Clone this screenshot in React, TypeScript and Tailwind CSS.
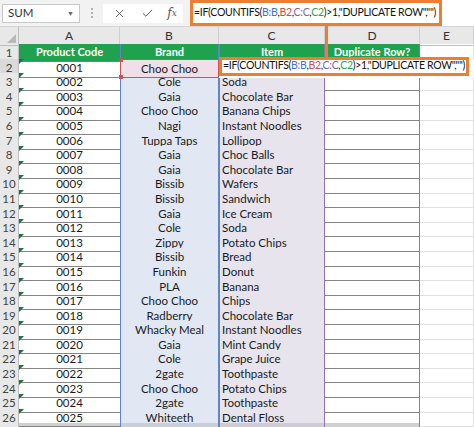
import React from "react";
import { X, Check } from "lucide-react";

const data: [string, string, string][] = [
  ["0001", "Choo Choo", ""],
  ["0002", "Cole", "Soda"],
  ["0003", "Gaia", "Chocolate Bar"],
  ["0004", "Choo Choo", "Banana Chips"],
  ["0005", "Nagi", "Instant Noodles"],
  ["0006", "Tuppa Taps", "Lollipop"],
  ["0007", "Gaia", "Choc Balls"],
  ["0008", "Gaia", "Chocolate Bar"],
  ["0009", "Bissib", "Wafers"],
  ["0010", "Bissib", "Sandwich"],
  ["0011", "Gaia", "Ice Cream"],
  ["0012", "Cole", "Soda"],
  ["0013", "Zippy", "Potato Chips"],
  ["0014", "Bissib", "Bread"],
  ["0015", "Funkin", "Donut"],
  ["0016", "PLA", "Banana"],
  ["0017", "Choo Choo", "Chips"],
  ["0018", "Radberry", "Chocolate Bar"],
  ["0019", "Whacky Meal", "Instant Noodles"],
  ["0020", "Gaia", "Mint Candy"],
  ["0021", "Cole", "Grape Juice"],
  ["0022", "2gate", "Toothpaste"],
  ["0023", "Choo Choo", "Potato Chips"],
  ["0024", "2gate", "Toothpaste"],
  ["0025", "Whiteeth", "Dental Floss"],
];

const grid = "grid grid-cols-[19px_101px_99px_106px_95px_54px]";

function Formula() {
  return (
    <span className="whitespace-nowrap text-[10.5px] tracking-[-0.3px] text-[#111]">
      =IF(COUNTIFS(<span className="text-[#4472c4]">B:B</span>,
      <span className="text-[#c0504d]">B2</span>,
      <span className="text-[#8064a2]">C:C</span>,
      <span className="text-[#3f9a4a]">C2</span>)&gt;1,"DUPLICATE ROW","")
    </span>
  );
}

function RowHead({ n, active }: { n?: number; active?: boolean }) {
  return (
    <div
      className={`flex items-center justify-center border-r border-b border-r-[#bdbdbd] border-b-[#d2d2d2] text-[11.5px] ${
        active ? "bg-[#dadada] text-[#3a3a3a]" : "bg-[#e8e8e8] text-[#444]"
      }`}
    >
      {n}
    </div>
  );
}

export default function App() {
  return (
    <div className="w-[474px] h-[427px] overflow-hidden bg-white relative font-['Lato','Open_Sans',sans-serif] text-[#1a1a1a]">
      {/* Formula bar */}
      <div className="h-[27px] flex items-center bg-[#f2f2f2] border-b border-[#d6d6d6]">
        <div className="ml-[2px] w-[78px] h-[19px] bg-white border border-[#c8c8c8] flex items-center justify-between pl-[5px] pr-[5px] text-[11.5px] text-[#333]">
          <span>SUM</span>
          <span className="text-[7px] text-[#666]">▼</span>
        </div>
        <div className="w-[23px] flex flex-col items-center gap-[2px]">
          <div className="w-[2px] h-[2px] bg-[#b0b0b0]" />
          <div className="w-[2px] h-[2px] bg-[#b0b0b0]" />
          <div className="w-[2px] h-[2px] bg-[#b0b0b0]" />
        </div>
        <div className="w-[80px] h-[19px] bg-white flex items-center text-[#555]">
          <div className="w-[28px] flex justify-center ml-[2px]">
            <X size={13} strokeWidth={1.6} />
          </div>
          <div className="w-[28px] flex justify-center">
            <Check size={13} strokeWidth={1.8} />
          </div>
          <div className="w-[22px] flex justify-center font-['DejaVu_Serif',serif] italic text-[12px] text-[#555]">
            f<span className="text-[9px] mt-[3px]">x</span>
          </div>
        </div>
        <div className="ml-[7px] flex-1 h-full bg-white flex items-center">
          <div className="w-[252px] h-[26px] border-[3px] border-[#ed7d31] flex items-center pl-[1px]">
            <Formula />
          </div>
        </div>
      </div>

      {/* Column headers */}
      <div className={`${grid} h-[17px] bg-[#e8e8e8] text-[12px] text-[#333]`}>
        <div className="relative border-r border-b border-[#bdbdbd]">
          <div className="absolute right-[2px] bottom-[2px] w-0 h-0 border-l-[9px] border-l-transparent border-b-[9px] border-b-[#b8b8b8]" />
        </div>
        {["A", "B", "C", "D", "E"].map((c) => (
          <div
            key={c}
            className="flex items-center justify-center border-r border-b border-r-[#cfcfcf] border-b-[#bdbdbd]"
          >
            {c}
          </div>
        ))}
      </div>

      {/* Row 1 */}
      <div className={`${grid} h-[14.6px] text-[11px]`}>
        <RowHead n={1} />
        <div className="bg-[#1ea24d] text-white font-bold flex items-center justify-center border-b border-[#7f7f7f]">
          Product Code
        </div>
        <div className="bg-[#1ea24d] text-white font-bold flex items-center justify-center border-b border-[#7f7f7f] shadow-[inset_1px_0_0_#5b86c9,inset_-1px_0_0_#5b86c9]">
          Brand
        </div>
        <div className="bg-[#1ea24d] text-white font-bold flex items-center justify-center border-b border-[#7f7f7f] shadow-[inset_1px_0_0_#8a75b0,inset_-1px_0_0_#8a75b0]">
          Item
        </div>
        <div className="bg-[#1ea24d] text-white font-bold flex items-center justify-center border-b border-r border-[#7f7f7f]">
          Duplicate Row?
        </div>
        <div className="border-r border-b border-[#e1e1e1]" />
      </div>

      {/* Data rows */}
      {data.map(([code, brand, item], i) => {
        const n = i + 2;
        const first = i === 0;
        return (
          <div key={n} className={`${grid} h-[14.6px] text-[11.5px]`}>
            <RowHead n={n} active={first} />
            <div className="relative flex items-center justify-center border-b border-[#858585]">
              <div className="absolute left-0 top-0 w-0 h-0 border-t-[5px] border-t-[#1e7145] border-r-[5px] border-r-transparent" />
              {code}
            </div>
            {first ? (
              <div className="relative flex items-center justify-center bg-[#efdfe6] border border-[#c9545a]">
                <div className="absolute left-[-2px] top-[-2px] w-[4px] h-[4px] bg-[#c9545a]" />
                <div className="absolute left-[-2px] bottom-[-2px] w-[4px] h-[4px] bg-[#c9545a]" />
                {brand}
              </div>
            ) : (
              <div className="flex items-center justify-center bg-[#e1e8f3] border-b border-[#a4a9b3] shadow-[inset_1px_0_0_#5b86c9,inset_-1px_0_0_#5b86c9]">
                {brand}
              </div>
            )}
            {first ? (
              <div className="col-span-3 relative bg-white">
                <div className="absolute left-0 top-[-2px] w-[250px] h-[19px] bg-white border-[3px] border-[#ed7d31] flex items-center pl-[1px] z-10">
                  <Formula />
                </div>
              </div>
            ) : (
              <>
                <div className="flex items-center pl-[3px] bg-[#e7e4ee] border-b border-[#a7a3ae] shadow-[inset_1px_0_0_#8a75b0,inset_-1px_0_0_#8a75b0] whitespace-nowrap overflow-hidden">
                  {item}
                </div>
                <div className="border-r border-b border-[#858585]" />
                <div className="border-r border-b border-[#e1e1e1]" />
              </>
            )}
          </div>
        );
      })}

      {/* Row 27 partial */}
      <div className={`${grid} h-[14.6px]`}>
        <RowHead />
        <div className="bg-[#d0d0d0]" />
        <div className="bg-[#c9cfd9] shadow-[inset_1px_0_0_#5b86c9,inset_-1px_0_0_#5b86c9]" />
        <div className="bg-[#cfcbd6] shadow-[inset_1px_0_0_#8a75b0,inset_-1px_0_0_#8a75b0]" />
        <div className="bg-[#d0d0d0] border-r border-[#858585]" />
        <div className="border-r border-[#e1e1e1]" />
      </div>

      {/* Connector line from formula bar to cell */}
      <div className="absolute left-[325px] top-[26px] w-[3px] h-[32px] bg-[#ed7d31]" />
    </div>
  );
}
